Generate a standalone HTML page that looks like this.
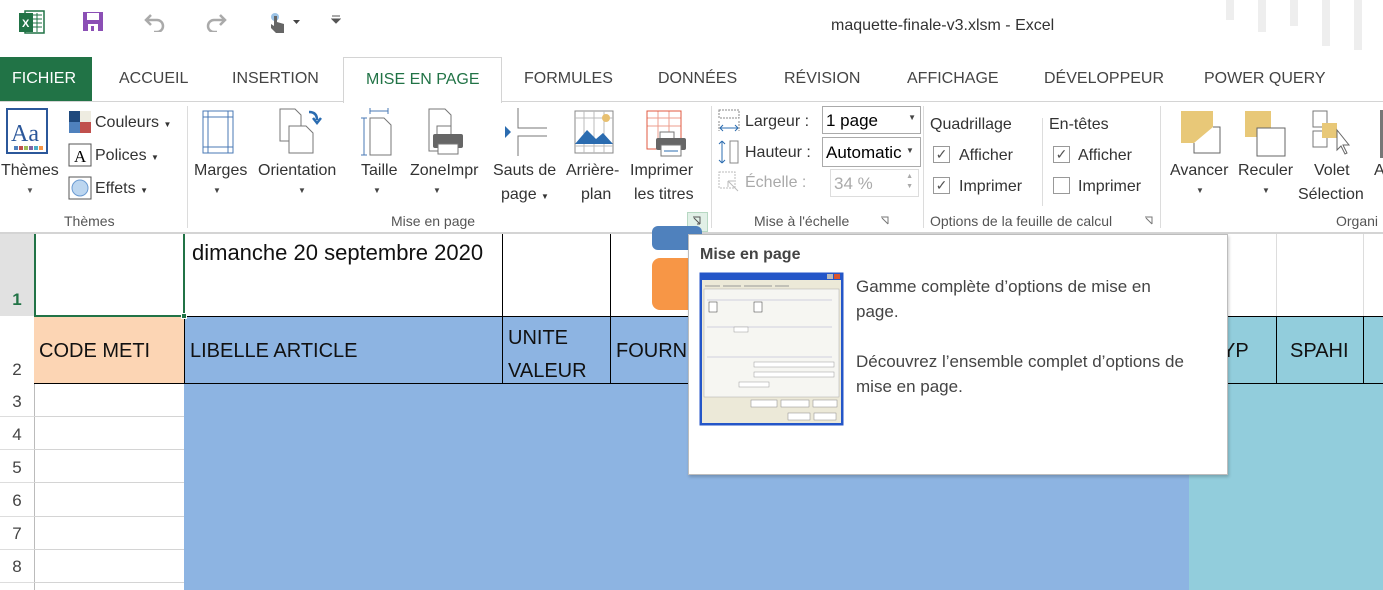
<!DOCTYPE html><html><head><meta charset="utf-8"><style>
*{margin:0;padding:0;box-sizing:border-box}
body{width:1383px;height:590px;overflow:hidden;background:#fff;font-family:"Liberation Sans",sans-serif;position:relative;color:#444}
.a{position:absolute;white-space:nowrap}
.t{font-size:16px;color:#444;top:70px}
.r{font-size:16px;color:#333}
.g{font-size:14px;color:#555;top:213px}
.sep{position:absolute;top:106px;width:1px;height:122px;background:#dcdcdc}
.cb{position:absolute;width:17px;height:17px;border:1px solid #999;background:#fff;font-size:14px;line-height:15px;text-align:center;color:#555}
.ic{position:absolute}
.cell{position:absolute;font-size:20px;color:#111}
.hl{position:absolute;left:34px;width:150px;height:1px;background:#d4d4d4}
.rn{position:absolute;left:0;width:34px;font-size:17px;color:#444;text-align:center}
</style></head><body>
<!-- title bar -->
<svg class="ic" style="left:19px;top:10px" width="26" height="24"><rect x="6" y="1" width="19" height="22" fill="#fff" stroke="#217346" stroke-width="1.5"/><path d="M14 5h9M14 9h9M14 13h9M14 17h9M18 3v19" stroke="#217346"/><rect x="0" y="3" width="14" height="19" fill="#217346"/><text x="3" y="17" font-size="11" fill="#fff" font-family="Liberation Sans" font-weight="bold">X</text></svg>
<svg class="ic" style="left:82px;top:11px" width="22" height="21"><rect x="1" y="1" width="20" height="19" fill="#8b4fb5"/><rect x="5" y="2" width="12" height="7" fill="#fff"/><rect x="6" y="13" width="10" height="7" fill="#fff"/><rect x="9" y="15" width="3" height="5" fill="#8b4fb5"/></svg>
<svg class="ic" style="left:142px;top:12px" width="25" height="20"><path d="M4 8h11a6 6 0 0 1 0 12h-3M9 3L4 8l5 5" fill="none" stroke="#aaa" stroke-width="2.5"/></svg>
<svg class="ic" style="left:204px;top:12px" width="25" height="20"><path d="M21 8H10a6 6 0 0 0 0 12h3M16 3l5 5-5 5" fill="none" stroke="#aaa" stroke-width="2.5"/></svg>
<svg class="ic" style="left:266px;top:11px" width="36" height="22"><circle cx="9" cy="6" r="4" fill="#9cc3e6"/><path d="M8 5v10l-3-2v4l5 5h8v-9l-7-2V5z" fill="#666"/><path d="M27 9h7l-3.5 4z" fill="#444"/></svg>
<svg class="ic" style="left:331px;top:15px" width="10" height="10"><path d="M1 1h8M1 4h8l-4 4z" fill="#555" stroke="#555"/></svg>
<div class="a" style="left:831px;top:17px;font-size:16px;color:#333">maquette-finale-v3.xlsm - Excel</div>
<div class="a" style="left:1226px;top:0;width:8px;height:20px;background:#eee"></div>
<div class="a" style="left:1258px;top:0;width:8px;height:32px;background:#eee"></div>
<div class="a" style="left:1290px;top:0;width:8px;height:26px;background:#eee"></div>
<div class="a" style="left:1322px;top:0;width:8px;height:46px;background:#eee"></div>
<div class="a" style="left:1354px;top:0;width:8px;height:50px;background:#eee"></div>
<!-- tabs -->
<div class="a" style="left:0;top:57px;width:92px;height:44px;background:#217346;color:#fff;font-size:16px;padding:13px 0 0 12px">FICHIER</div>
<div class="a t" style="left:119px">ACCUEIL</div>
<div class="a t" style="left:232px">INSERTION</div>
<div class="a" style="left:343px;top:57px;width:159px;height:46px;border:1px solid #d4d4d4;border-bottom:none;background:#fff;color:#217346;font-size:16px;padding:13px 0 0 22px">MISE EN PAGE</div>
<div class="a t" style="left:524px">FORMULES</div>
<div class="a t" style="left:658px">DONNÉES</div>
<div class="a t" style="left:784px">RÉVISION</div>
<div class="a t" style="left:907px">AFFICHAGE</div>
<div class="a t" style="left:1044px">DÉVELOPPEUR</div>
<div class="a t" style="left:1204px">POWER QUERY</div>
<div class="a" style="left:0;top:101px;width:1383px;height:1px;background:#d4d4d4"></div>
<div class="a" style="left:344px;top:101px;width:157px;height:2px;background:#fff"></div>
<!-- ribbon -->
<div class="a" style="left:0;top:232px;width:1383px;height:2px;background:#d4d4d4"></div>
<svg class="ic" style="left:6px;top:108px" width="52" height="58"><rect x="1" y="1" width="40" height="44" fill="#fff" stroke="#2b579a" stroke-width="2"/><text x="5" y="33" font-size="24" fill="#2b579a" font-family="Liberation Serif">Aa</text><g><rect x="8" y="38" width="4" height="4" fill="#4f81bd"/><rect x="13" y="38" width="4" height="4" fill="#c0504d"/><rect x="18" y="38" width="4" height="4" fill="#9bbb59"/><rect x="23" y="38" width="4" height="4" fill="#8064a2"/><rect x="28" y="38" width="4" height="4" fill="#4bacc6"/><rect x="33" y="38" width="4" height="4" fill="#f79646"/></g></svg>
<div class="a r" style="left:1px;top:162px">Thèmes</div>
<div class="a" style="left:26px;top:186px;font-size:8px;color:#555">▼</div>
<svg class="ic" style="left:68px;top:110px" width="24" height="24"><rect x="1" y="1" width="11" height="11" fill="#1f497d"/><rect x="12" y="1" width="11" height="11" fill="#eeece1"/><rect x="1" y="12" width="11" height="11" fill="#4f81bd"/><rect x="12" y="12" width="11" height="11" fill="#c0504d"/></svg>
<div class="a r" style="left:95px;top:114px">Couleurs <span style="font-size:8px">▼</span></div>
<svg class="ic" style="left:68px;top:143px" width="24" height="24"><rect x="1" y="1" width="22" height="22" fill="#fff" stroke="#555"/><text x="6" y="19" font-size="17" fill="#000" font-family="Liberation Serif">A</text></svg>
<div class="a r" style="left:95px;top:147px">Polices <span style="font-size:8px">▼</span></div>
<svg class="ic" style="left:68px;top:176px" width="24" height="24"><rect x="1" y="1" width="22" height="22" fill="#fff" stroke="#555"/><circle cx="12" cy="12" r="8" fill="#bcd6f0" stroke="#6b9bd2"/></svg>
<div class="a r" style="left:95px;top:180px">Effets <span style="font-size:8px">▼</span></div>
<div class="a g" style="left:64px">Thèmes</div>
<div class="sep" style="left:187px"></div>
<svg class="ic" style="left:202px;top:110px" width="38" height="46"><rect x="1" y="1" width="30" height="42" fill="#fff" stroke="#4a78b4"/><path d="M6 1v42M26 1v42M1 7h30M1 37h30" stroke="#4a78b4"/></svg>
<div class="a r" style="left:194px;top:162px">Marges</div><div class="a" style="left:213px;top:186px;font-size:8px">▼</div>
<svg class="ic" style="left:279px;top:108px" width="50" height="48"><path d="M1 1h15l6 6v26H1z" fill="#fff" stroke="#777"/><path d="M10 18h17l7 7v20H10z" fill="#fff" stroke="#777"/><path d="M30 4q8 0 8 8M34 10l4 5 4-5" fill="none" stroke="#2b6cb0" stroke-width="2.5"/></svg>
<div class="a r" style="left:258px;top:162px">Orientation</div><div class="a" style="left:298px;top:186px;font-size:8px">▼</div>
<svg class="ic" style="left:361px;top:108px" width="40" height="48"><path d="M9 3h18M9 0v6M27 0v6" stroke="#4a78b4"/><path d="M3 10v37M0 10h6M0 47h6" stroke="#4a78b4"/><path d="M9 10h14l7 7v30H9z" fill="#fff" stroke="#777"/></svg>
<div class="a r" style="left:361px;top:162px">Taille</div><div class="a" style="left:373px;top:186px;font-size:8px">▼</div>
<svg class="ic" style="left:428px;top:108px" width="44" height="48"><path d="M1 1h16l6 6v36H1z" fill="#fff" stroke="#777"/><rect x="9" y="18" width="14" height="10" fill="#fff" stroke="#777"/><rect x="5" y="26" width="30" height="14" rx="2" fill="#666"/><rect x="10" y="36" width="20" height="10" fill="#fff" stroke="#777"/></svg>
<div class="a r" style="left:410px;top:162px">ZoneImpr</div><div class="a" style="left:433px;top:186px;font-size:8px">▼</div>
<svg class="ic" style="left:505px;top:108px" width="42" height="48"><path d="M13 0v20h30M13 48V28h30" fill="none" stroke="#777"/><path d="M0 18l6 6-6 6z" fill="#2b6cb0"/></svg>
<div class="a r" style="left:493px;top:162px">Sauts de</div><div class="a r" style="left:501px;top:186px">page <span style="font-size:8px">▼</span></div>
<svg class="ic" style="left:574px;top:110px" width="42" height="46"><rect x="1" y="1" width="38" height="42" fill="#fff" stroke="#888"/><path d="M1 8h38M1 36h38M10 1v42M20 1v42M30 1v42" stroke="#bbb"/><circle cx="32" cy="8" r="4" fill="#e8c070"/><path d="M1 34l12-14 9 9 7-6 10 11z" fill="#2b6cb0"/></svg>
<div class="a r" style="left:566px;top:162px">Arrière-</div><div class="a r" style="left:581px;top:186px">plan</div>
<svg class="ic" style="left:646px;top:110px" width="44" height="48"><rect x="1" y="1" width="34" height="38" fill="#fff" stroke="#e05a40"/><path d="M1 8h34M1 16h34M12 1v38M23 1v38" stroke="#e05a40" stroke-opacity=".6"/><rect x="14" y="22" width="14" height="8" fill="#fff" stroke="#777"/><rect x="10" y="28" width="30" height="12" rx="2" fill="#666"/><rect x="15" y="35" width="20" height="11" fill="#fff" stroke="#777"/><path d="M18 41h14" stroke="#2b6cb0"/></svg>
<div class="a r" style="left:630px;top:162px">Imprimer</div><div class="a r" style="left:634px;top:186px">les titres</div>
<div class="a g" style="left:391px">Mise en page</div>
<div class="a" style="left:687px;top:212px;width:21px;height:20px;background:#e1f0e7;border:1px solid #b7d8c3"></div>
<svg class="ic" style="left:692px;top:216px" width="11" height="11"><path d="M1 1h7v7M2 2l6 6M5 8h3" fill="none" stroke="#555"/></svg>
<div class="sep" style="left:711px"></div>
<svg class="ic" style="left:718px;top:109px" width="24" height="24"><path d="M1 1h20v8H1zM1 12v10M21 12v10" fill="none" stroke="#888" stroke-dasharray="2 1"/><path d="M2 19h18M2 19l3-3M2 19l3 3M20 19l-3-3M20 19l-3 3" stroke="#2b6cb0" fill="none"/></svg>
<div class="a r" style="left:745px;top:113px">Largeur :</div>
<div class="a" style="left:822px;top:106px;width:99px;height:28px;border:1px solid #aaa;background:#fff;font-size:17px;color:#000;padding:4px 3px">1 page<span style="position:absolute;right:4px;top:6px;font-size:8px;color:#444">▼</span></div>
<svg class="ic" style="left:718px;top:139px" width="24" height="26"><rect x="12" y="2" width="8" height="22" fill="none" stroke="#888"/><path d="M4 2v22M4 2l-3 3M4 2l3 3M4 24l-3-3M4 24l3-3" stroke="#2b6cb0" fill="none"/></svg>
<div class="a r" style="left:745px;top:144px">Hauteur :</div>
<div class="a" style="left:822px;top:137px;width:99px;height:30px;border:1px solid #aaa;background:#fff;font-size:17px;color:#000;padding:5px 3px;overflow:hidden">Automatic<span style="position:absolute;right:0;top:0;width:14px;height:28px;background:#fff;font-size:8px;color:#444;padding-top:8px">▼</span></div>
<svg class="ic" style="left:718px;top:171px" width="24" height="24"><rect x="1" y="1" width="16" height="16" fill="none" stroke="#bbb" stroke-dasharray="2 1"/><path d="M10 10l10 10M10 10h6M10 10v6" stroke="#bbb" fill="none"/></svg>
<div class="a r" style="left:745px;top:174px;color:#aaa">Échelle :</div>
<div class="a" style="left:830px;top:169px;width:89px;height:28px;border:1px solid #ddd;font-size:17px;color:#aaa;padding:4px 3px">34 %<span style="position:absolute;right:5px;top:2px;font-size:7px;line-height:10px">▲<br>▼</span></div>
<div class="a g" style="left:754px">Mise à l'échelle</div>
<svg class="ic" style="left:880px;top:216px" width="11" height="11"><path d="M1 1h7v7M2 2l6 6" fill="none" stroke="#777"/></svg>
<div class="sep" style="left:923px"></div>
<div class="a r" style="left:930px;top:116px">Quadrillage</div>
<div class="cb" style="left:933px;top:146px">✓</div><div class="a r" style="left:959px;top:147px">Afficher</div>
<div class="cb" style="left:933px;top:177px">✓</div><div class="a r" style="left:959px;top:178px">Imprimer</div>
<div class="a" style="left:1042px;top:118px;width:1px;height:88px;background:#ddd"></div>
<div class="a r" style="left:1049px;top:116px">En-têtes</div>
<div class="cb" style="left:1053px;top:146px">✓</div><div class="a r" style="left:1078px;top:147px">Afficher</div>
<div class="cb" style="left:1053px;top:177px"></div><div class="a r" style="left:1078px;top:178px">Imprimer</div>
<div class="a g" style="left:930px">Options de la feuille de calcul</div>
<svg class="ic" style="left:1144px;top:216px" width="11" height="11"><path d="M1 1h7v7M2 2l6 6" fill="none" stroke="#777"/></svg>
<div class="sep" style="left:1160px"></div>
<svg class="ic" style="left:1180px;top:110px" width="44" height="48"><rect x="1" y="1" width="32" height="32" fill="#e8c878"/><path d="M33 17h7v26H14V33" fill="#fff" stroke="#666"/></svg>
<div class="a r" style="left:1170px;top:162px">Avancer</div><div class="a" style="left:1196px;top:186px;font-size:8px">▼</div>
<svg class="ic" style="left:1244px;top:110px" width="44" height="48"><rect x="1" y="1" width="26" height="26" fill="#e8c878"/><rect x="13" y="18" width="28" height="28" fill="#fff" stroke="#666"/></svg>
<div class="a r" style="left:1238px;top:162px">Reculer</div><div class="a" style="left:1262px;top:186px;font-size:8px">▼</div>
<svg class="ic" style="left:1312px;top:110px" width="44" height="48"><rect x="1" y="1" width="14" height="16" fill="#fff" stroke="#777"/><rect x="1" y="21" width="14" height="16" fill="#fff" stroke="#777"/><rect x="10" y="13" width="15" height="15" fill="#e8c878"/><path d="M25 20v20l4-4 4 8 2-1-4-8h6z" fill="#fff" stroke="#666"/></svg>
<div class="a r" style="left:1314px;top:162px">Volet</div><div class="a r" style="left:1298px;top:186px">Sélection</div>
<div class="a r" style="left:1374px;top:162px">A</div>
<div class="a" style="left:1380px;top:110px;width:3px;height:48px;background:#777"></div>
<div class="a g" style="left:1336px">Organi</div>
<!-- grid -->
<div class="a" style="left:0;top:234px;width:34px;height:82px;background:#e1e1e1"></div>
<div class="rn" style="top:290px;color:#217346;font-weight:bold">1</div>
<div class="a" style="left:34px;top:234px;width:1px;height:356px;background:#bbb"></div>
<div class="a" style="left:34px;top:316px;width:151px;height:67px;background:#fcd5b4"></div>
<div class="a" style="left:184px;top:316px;width:1005px;height:274px;background:#8db4e2"></div>
<div class="a" style="left:1189px;top:316px;width:194px;height:274px;background:#92cddc"></div>
<div class="a" style="left:34px;top:316px;width:1349px;height:1px;background:#000"></div>
<div class="a" style="left:34px;top:383px;width:1349px;height:1px;background:#000"></div>
<div class="a" style="left:184px;top:234px;width:1px;height:150px;background:#000"></div>
<div class="a" style="left:502px;top:234px;width:1px;height:150px;background:#000"></div>
<div class="a" style="left:610px;top:234px;width:1px;height:150px;background:#000"></div>
<div class="a" style="left:1276px;top:316px;width:1px;height:68px;background:#000"></div>
<div class="a" style="left:1363px;top:316px;width:1px;height:68px;background:#000"></div>
<div class="a" style="left:1276px;top:234px;width:1px;height:82px;background:#ddd"></div>
<div class="a" style="left:1363px;top:234px;width:1px;height:82px;background:#ddd"></div>
<div class="a" style="left:34px;top:234px;width:151px;height:83px;border:2px solid #217346;border-top:none"></div>
<div class="a" style="left:181px;top:313px;width:6px;height:6px;background:#217346;border:1px solid #fff"></div>
<div class="rn" style="top:360px">2</div>
<div class="hl" style="top:416px"></div><div class="hl" style="top:449px"></div><div class="hl" style="top:482px"></div><div class="hl" style="top:516px"></div><div class="hl" style="top:549px"></div><div class="hl" style="top:582px"></div>
<div class="a" style="left:0;top:416px;width:34px;height:1px;background:#ddd"></div>
<div class="a" style="left:0;top:449px;width:34px;height:1px;background:#ddd"></div>
<div class="a" style="left:0;top:482px;width:34px;height:1px;background:#ddd"></div>
<div class="a" style="left:0;top:516px;width:34px;height:1px;background:#ddd"></div>
<div class="a" style="left:0;top:549px;width:34px;height:1px;background:#ddd"></div>
<div class="a" style="left:0;top:582px;width:34px;height:1px;background:#ddd"></div>
<div class="rn" style="top:392px">3</div><div class="rn" style="top:425px">4</div><div class="rn" style="top:458px">5</div><div class="rn" style="top:491px">6</div><div class="rn" style="top:524px">7</div><div class="rn" style="top:557px">8</div>
<div class="cell" style="left:192px;top:240px;font-size:22px">dimanche 20 septembre 2020</div>
<div class="cell" style="left:39px;top:340px">CODE METI</div>
<div class="cell" style="left:190px;top:340px">LIBELLE ARTICLE</div>
<div class="cell" style="left:508px;top:322px;line-height:33px">UNITE<br>VALEUR</div>
<div class="cell" style="left:616px;top:340px">FOURN</div>
<div class="cell" style="left:1222px;top:340px">YP</div>
<div class="cell" style="left:1290px;top:340px">SPAHI</div>
<div class="a" style="left:652px;top:226px;width:50px;height:24px;background:#4f81bd;border-radius:6px"></div>
<div class="a" style="left:652px;top:258px;width:50px;height:52px;background:#f79646;border-radius:8px"></div>
<!-- tooltip -->
<div class="a" style="left:688px;top:234px;width:540px;height:241px;background:#fff;border:1px solid #bdbdbd;box-shadow:1px 2px 3px rgba(0,0,0,.2)"></div>
<div class="a" style="left:700px;top:246px;font-size:16px;font-weight:bold;color:#444">Mise en page</div>
<svg class="ic" style="left:699px;top:272px" width="145" height="154"><rect x="0.5" y="0.5" width="144" height="153" fill="#2456c8"/><rect x="3" y="8" width="139" height="143" fill="#ece9d8"/><rect x="128" y="2" width="6" height="5" fill="#bbb"/><rect x="135" y="2" width="6" height="5" fill="#d9552f"/><path d="M6 14h15M24 14h18M45 14h28M76 14h14" stroke="#999"/><rect x="5" y="17" width="135" height="108" fill="#f6f6f2" stroke="#aaa" stroke-width=".5"/><path d="M8 28h125M8 55h125M8 85h125" stroke="#aac" stroke-width=".5"/><rect x="10" y="30" width="8" height="10" fill="#fff" stroke="#333" stroke-width=".5"/><rect x="55" y="30" width="8" height="10" fill="#fff" stroke="#333" stroke-width=".5"/><rect x="35" y="55" width="14" height="5" fill="#fff" stroke="#999" stroke-width=".5"/><rect x="55" y="90" width="80" height="5" fill="#fff" stroke="#999" stroke-width=".5"/><rect x="55" y="100" width="80" height="5" fill="#fff" stroke="#999" stroke-width=".5"/><rect x="40" y="110" width="30" height="5" fill="#fff" stroke="#999" stroke-width=".5"/><rect x="52" y="128" width="26" height="7" fill="#fff" stroke="#888" stroke-width=".5"/><rect x="82" y="128" width="28" height="7" fill="#fff" stroke="#888" stroke-width=".5"/><rect x="114" y="128" width="24" height="7" fill="#fff" stroke="#888" stroke-width=".5"/><rect x="89" y="141" width="22" height="7" fill="#fff" stroke="#888" stroke-width=".5"/><rect x="115" y="141" width="22" height="7" fill="#fff" stroke="#888" stroke-width=".5"/></svg>
<div class="a" style="left:856px;top:274px;font-size:17px;color:#444;line-height:25px">Gamme complète d’options de mise en<br>page.<br><br>Découvrez l’ensemble complet d’options de<br>mise en page.</div>
</body></html>
